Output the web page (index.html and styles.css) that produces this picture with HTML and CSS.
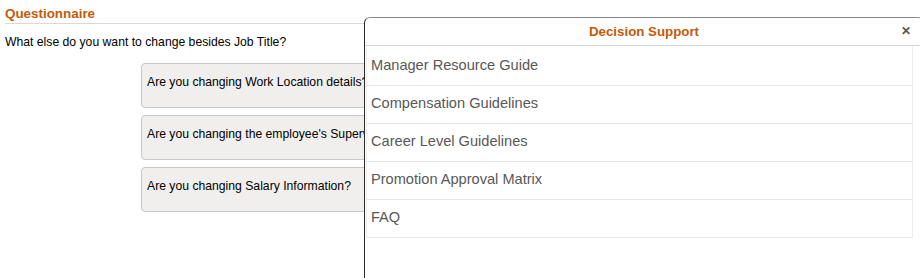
FILE: index.html
```html
<!DOCTYPE html>
<html>
<head>
<meta charset="utf-8">
<link rel="stylesheet" href="styles.css">
</head>
<body>
<div class="page">
  <h1 class="section-title">Questionnaire</h1>
  <p class="question">What else do you want to change besides Job Title?</p>
  <div class="options">
    <div class="option">Are you changing Work Location details?</div>
    <div class="option">Are you changing the employee's Supervisor?</div>
    <div class="option">Are you changing Salary Information?</div>
  </div>
</div>
<div class="modal">
  <div class="modal-header">
    <span class="modal-title">Decision Support</span>
    <span class="modal-close">&#x2715;</span>
  </div>
  <div class="modal-body">
    <ul class="links">
      <li class="link">Manager Resource Guide</li>
      <li class="link">Compensation Guidelines</li>
      <li class="link">Career Level Guidelines</li>
      <li class="link">Promotion Approval Matrix</li>
      <li class="link">FAQ</li>
    </ul>
  </div>
</div>
</body>
</html>
```
FILE: styles.css
```css
html, body {
  margin: 0;
  padding: 0;
  background: #fff;
  font-family: "Liberation Sans", Arial, sans-serif;
  overflow: hidden;
}
.page {
  padding: 5px 0 0 5px;
  width: 915px;
}
.section-title {
  margin: 0;
  font-size: 13.4px;
  font-weight: bold;
  color: #c25a09;
  line-height: 17px;
  padding-bottom: 1px;
  border-bottom: 1px solid #d8d8d8;
}
.question {
  margin: 0;
  padding-top: 11px;
  font-size: 12.2px;
  line-height: 15px;
  color: #000;
}
.options {
  display: flex;
  flex-direction: column;
  gap: 7px;
  margin-top: 13px;
  margin-left: 136px;
  width: 300px;
}
.option {
  box-sizing: border-box;
  height: 45px;
  background: #f0efed;
  border: 1px solid #c8c8c8;
  border-radius: 4px;
  padding: 11px 0 0 5px;
  font-size: 12.2px;
  line-height: 15px;
  color: #000;
  white-space: nowrap;
  overflow: hidden;
}
.modal {
  position: absolute;
  left: 364px;
  top: 17px;
  width: 560px;
  height: 261px;
  box-sizing: border-box;
  background: #fff;
  border: 1px solid #2a2a2a;
  border-top-color: #8a8a8a;
  border-bottom: none;
  border-radius: 6px 6px 0 0;
  overflow: hidden;
}
.modal-header {
  height: 27px;
  display: flex;
  align-items: center;
  justify-content: center;
  position: relative;
  border-bottom: 1px solid #d6d6d6;
}
.modal-title {
  font-size: 13.3px;
  font-weight: bold;
  color: #c25a09;
}
.modal-close {
  position: absolute;
  left: 536px;
  top: 6px;
  font-size: 12px;
  font-weight: bold;
  color: #555;
}
.modal-body {
  padding-left: 1px;
}
.links {
  list-style: none;
  margin: 0;
  padding: 0;
  width: 545px;
  border-left: 1px solid #ececec;
  border-right: 1px solid #ececec;
}
.link {
  box-sizing: border-box;
  height: 38px;
  padding: 9px 0 0 4px;
  font-size: 14.6px;
  line-height: 17px;
  color: #585858;
  border-bottom: 1px solid #e6e6e6;
}
.link:first-child {
  height: 40px;
  padding-top: 11px;
}
```
